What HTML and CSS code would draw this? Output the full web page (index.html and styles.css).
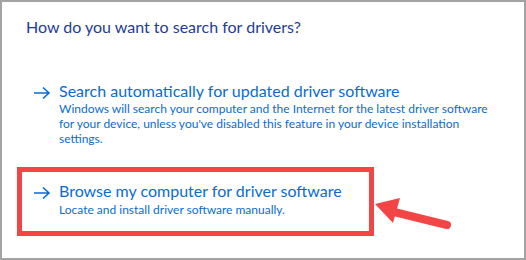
FILE: index.html
```html
<!DOCTYPE html>
<html lang="en">
<head>
    <meta charset="UTF-8">
    <title>Update Drivers</title>
    <link rel="stylesheet" href="styles.css">
</head>
<body>
    <div class="dialog">
        <h1 class="title">How do you want to search for drivers?</h1>

        <div class="option option-auto">
            <svg class="option-arrow" width="18" height="14" viewBox="0 0 18 14">
                <path d="M1 7 H16 M10 1.5 L16 7 L10 12.5" fill="none" stroke="#0a6cd0" stroke-width="1.6"/>
            </svg>
            <div class="option-text">
                <div class="option-head">Search automatically for updated driver software</div>
                <div class="option-desc">Windows will search your computer and the Internet for the latest driver software<br>for your device, unless you've disabled this feature in your device installation<br>settings.</div>
            </div>
        </div>

        <div class="option option-browse">
            <svg class="option-arrow" width="18" height="14" viewBox="0 0 18 14">
                <path d="M1 7 H16 M10 1.5 L16 7 L10 12.5" fill="none" stroke="#0a6cd0" stroke-width="1.6"/>
            </svg>
            <div class="option-text">
                <div class="option-head">Browse my computer for driver software</div>
                <div class="option-desc">Locate and install driver software manually.</div>
            </div>
        </div>
    </div>

    <!-- annotation arrow over the dialog -->
    <svg class="pointer" width="526" height="260" viewBox="0 0 526 260">
        <line x1="394" y1="212" x2="447" y2="225" stroke="#f24646" stroke-width="8" stroke-linecap="round"/>
        <polygon points="375,204 400,198 393,223" fill="#f24646"/>
    </svg>
</body>
</html>
```

FILE: styles.css
```css
* {
    margin: 0;
    padding: 0;
    box-sizing: border-box;
}

body {
    position: relative;
    width: 526px;
    height: 260px;
    background: white;
    font-family: Lato, 'Open Sans', sans-serif;
}

.dialog {
    width: 526px;
    height: 260px;
    border: 2px solid #a3a3a3;
    padding-top: 15px;
}

.title {
    font-size: 16px;
    font-weight: normal;
    line-height: 20px;
    color: #1e3c96;
    padding-left: 24px;
}

.option {
    display: flex;
    gap: 8px;
    color: #0a6cd0;
}

.option-arrow {
    flex: none;
    margin-top: 5px;
}

.option-head {
    font-size: 16px;
    line-height: 20px;
}

.option-desc {
    font-size: 12px;
    line-height: 15px;
    white-space: nowrap;
}

.option-auto {
    margin-top: 44px;
    padding-left: 31px;
}

.option-browse {
    margin-top: 21px;
    margin-left: 15px;
    width: 357px;
    border: 5px solid #f24646;
    padding: 9px 0 14px 11px;
}

.option-browse .option-desc {
    margin-top: 1px;
}

.pointer {
    position: absolute;
    top: 0;
    left: 0;
    pointer-events: none;
}
```
